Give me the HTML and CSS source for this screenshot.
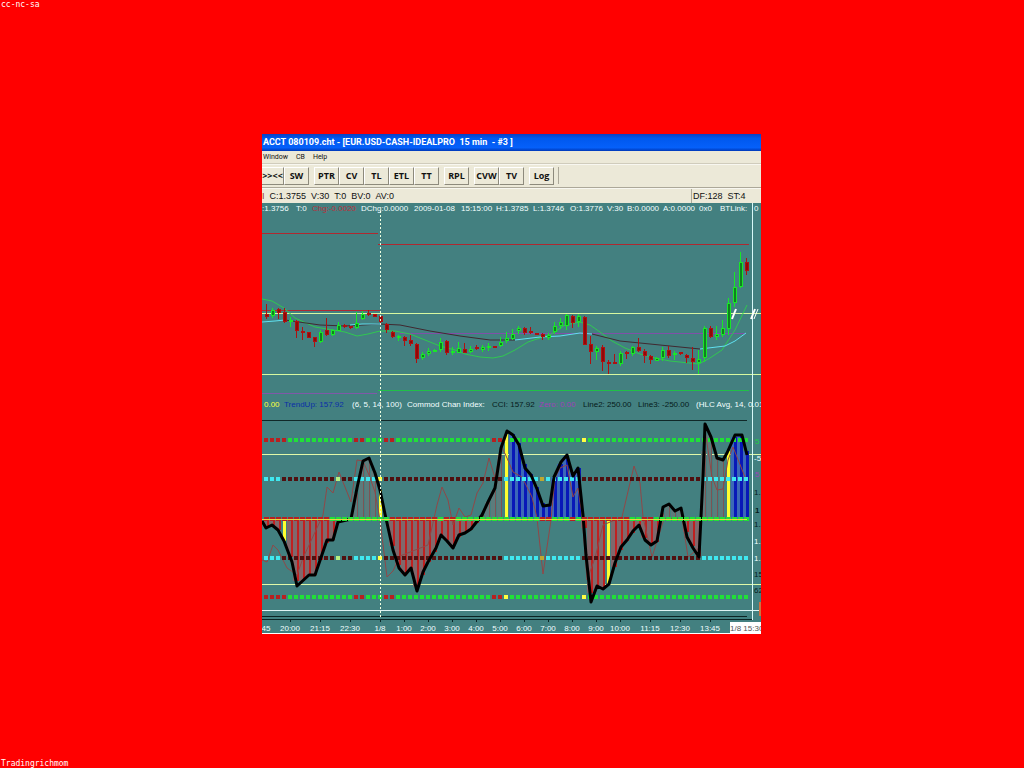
FILE: index.html
```
<!DOCTYPE html>
<html lang="en">
<head>
    <meta charset="UTF-8">
    <meta name="viewport" content="width=device-width, initial-scale=1.0">
    <title>EUR.USD 15 min chart</title>
    <link rel="stylesheet" href="styles.css">
</head>
<body>
    <header class="credit">cc-nc-sa</header>
    <main class="window">
        <h1 class="title-bar">ACCT 080109.cht - [EUR.USD-CASH-IDEALPRO&nbsp; 15 min&nbsp; - #3 ]</h1>
        <nav class="menu-bar">
            <button class="menu-item">Window</button>
            <button class="menu-item">CB</button>
            <button class="menu-item">Help</button>
        </nav>
        <div class="toolbar">
            <div class="group">
                <button class="tool tool-cut">&gt;&gt;&lt;&lt;</button>
                <button class="tool">SW</button>
            </div>
            <div class="group">
                <button class="tool">PTR</button>
                <button class="tool">CV</button>
                <button class="tool">TL</button>
                <button class="tool">ETL</button>
                <button class="tool">TT</button>
            </div>
            <div class="group">
                <button class="tool">RPL</button>
            </div>
            <div class="group">
                <button class="tool">CVW</button>
                <button class="tool">TV</button>
            </div>
            <div class="group">
                <button class="tool">Log</button>
            </div>
        </div>
        <div class="status-bar">
            <span class="edge">I</span>
            <span>C:1.3755</span>
            <span>V:30</span>
            <span>T:0</span>
            <span>BV:0</span>
            <span>AV:0</span>
            <div class="status-right">
                <span>DF:128</span>
                <span>ST:4</span>
            </div>
        </div>
        <svg class="chart" id="chart" viewBox="262 203 499 431" role="img" aria-label="EUR.USD candles with CCI panel">
            <g id="plot"></g>
            <g class="quote">
                <text x="262" y="211">:1.3756</text>
                <text x="296" y="211">T:0</text>
                <text x="312" y="211" class="loss">Chg:-0.0020</text>
                <text x="361" y="211">DChg:0.0000</text>
                <text x="414" y="211">2009-01-08</text>
                <text x="461" y="211">15:15:00</text>
                <text x="496" y="211">H:1.3785</text>
                <text x="533" y="211">L:1.3746</text>
                <text x="570" y="211">O:1.3776</text>
                <text x="607" y="211">V:30</text>
                <text x="627" y="211">B:0.0000</text>
                <text x="663" y="211">A:0.0000</text>
                <text x="699" y="211">0x0</text>
                <text x="720" y="211">BTLink:</text>
                <text x="754" y="211">0</text>
            </g>
            <g class="quote">
                <text x="264" y="407" class="yellow">0.00</text>
                <text x="284" y="407" class="trend">TrendUp: 157.92</text>
                <text x="352" y="407">(6, 5, 14, 100)</text>
                <text x="407" y="407">Commod Chan Index:</text>
                <text x="492" y="407" class="dark">CCI: 157.92</text>
                <text x="539" y="407" class="zero">Zero: 0.00</text>
                <text x="583" y="407" class="dark">Line2: 250.00</text>
                <text x="638" y="407" class="dark">Line3: -250.00</text>
                <text x="696" y="407">(HLC Avg, 14, 0.01</text>
            </g>
            <g class="scale">
                <text x="755" y="444" class="up">5</text>
                <text x="754" y="461">-5</text>
                <text x="755" y="477" class="zero">5</text>
                <text x="754" y="495" class="dark">1.</text>
                <text x="755" y="513" class="dark strong">1</text>
                <text x="754" y="527" class="dark">1.</text>
                <text x="754" y="544">1.</text>
                <text x="754" y="561">1.</text>
                <text x="754" y="577" class="dark">15</text>
                <text x="754" y="593" class="dark">62</text>
            </g>
            <g class="times" id="times"></g>
            <rect x="730" y="622" width="31" height="11" fill="#fff"/>
            <text x="730" y="631" class="now">1/8 15:30</text>
        </svg>
    </main>
    <footer class="credit credit-bottom">Tradingrichmom</footer>
    <script src="chart.js"></script>
</body>
</html>
```
FILE: styles.css
```
* {
    box-sizing: border-box;
}
body {
    margin: 0;
    padding-right: 1px;
    min-height: 100vh;
    display: grid;
    grid-template-rows: 1fr auto 1fr;
    background-color: #ff0000;
    font-family: "Liberation Sans", Arial, sans-serif;
}
.credit {
    padding: 0 1px;
    font-family: "DejaVu Sans Mono", monospace;
    font-size: 8px;
    line-height: 9px;
    color: #fff;
}
.credit-bottom {
    align-self: end;
}
.window {
    width: 100%;
    max-width: 499px;
    margin: 0 auto;
    overflow: hidden;
    background-color: #ece9d8;
    color: #111;
}
.title-bar {
    margin: 0;
    padding: 0 1px;
    background: linear-gradient(#0a3fc4, #0058ee 25%, #0560fa 80%, #0038b8);
    color: #fff;
    font-family: Roboto, sans-serif;
    font-size: 9px;
    font-weight: bold;
    line-height: 17px;
    white-space: nowrap;
}
.menu-bar {
    display: flex;
    gap: 8px;
    height: 13px;
    padding: 0 1px;
    border-bottom: 1px solid #d0ccbc;
}
.menu-item {
    padding: 0;
    border: none;
    background: none;
    color: #111;
    font-family: Roboto, sans-serif;
    font-size: 7px;
    line-height: 12px;
}
.toolbar {
    display: flex;
    gap: 5px;
    height: 24px;
    padding: 2px 0 3px;
    border-top: 1px solid #f8f7f0;
    border-bottom: 1px solid #aca899;
}
.group {
    display: flex;
}
.group:last-child {
    padding-right: 4px;
    border-right: 1px solid #aca899;
}
.tool {
    width: 25px;
    height: 18px;
    padding: 0;
    border: 1px solid;
    border-color: #fff #8d8a7c #8d8a7c #fff;
    background-color: #ece9d8;
    color: #111;
    font-family: "Open Sans", sans-serif;
    font-size: 9px;
    font-weight: bold;
    line-height: 16px;
}
.tool-cut {
    width: 22px;
    border-left: none;
}
.status-bar {
    display: flex;
    gap: 5px;
    height: 15px;
    border-top: 1px solid #f8f7f0;
    font-size: 9px;
    line-height: 14px;
    white-space: nowrap;
}
.edge {
    color: #a03020;
}
.status-right {
    display: flex;
    gap: 5px;
    width: 70px;
    margin-left: auto;
    padding-left: 1px;
    border-left: 1px solid #aca899;
}
.chart {
    display: block;
    width: 100%;
    height: auto;
    background-color: #438080;
}
.chart text {
    font-size: 8px;
    fill: #f2ffff;
    white-space: pre;
}
.chart .loss {
    fill: #b8323c;
}
.chart .yellow {
    fill: #ffff40;
}
.chart .trend {
    fill: #0a2fa8;
}
.chart .dark {
    fill: #061a1a;
}
.chart .zero {
    fill: #a040b8;
}
.chart .up {
    fill: #20d040;
}
.chart .strong {
    font-weight: bold;
}
.chart .now {
    fill: #555;
}
.times text {
    text-anchor: middle;
}
```
FILE: chart.js
```
const plot = document.getElementById("plot");
const times = document.getElementById("times");
const FIRST = 266;
const STEP = 6;
const ZERO = 519;

function add(parent, tag, attrs, text) {
    const el = document.createElementNS("http://www.w3.org/2000/svg", tag);
    for (const key in attrs) el.setAttribute(key, attrs[key]);
    if (text) el.textContent = text;
    parent.appendChild(el);
}

function rect(x, y, width, height, fill) {
    add(plot, "rect", {x, y, width, height, fill, "shape-rendering": "crispEdges"});
}

function line(points, stroke, width) {
    add(plot, "polyline", {points, fill: "none", stroke, "stroke-width": width, "stroke-linejoin": "round"});
}

// colour, wick top, wick bottom, body top, body bottom
const candles = `r 304 319 314 317,g 308 318 310 316,r 308 319 309 313,r 308 323 312 322,g 317 327 320 322,
r 320 338 321 331,r 327 340 331 333,r 332 338 332 338,r 337 347 337 342,g 330 343 332 342,r 318 336 330 335,
g 329 336 330 335,g 322 331 325 331,r 324 328 325 327,r 326 329 326 328,g 312 329 323 328,g 311 320 314 319,
r 310 316 313 315,r 314 317 314 317,r 315 323 316 322,r 323 333 324 330,r 331 338 332 337,g 335 341 336 338,
r 336 346 337 341,r 335 346 340 344,r 343 363 344 359,g 352 360 354 358,g 348 356 351 354,g 349 352 350 352,
g 338 352 342 350,r 340 355 341 353,g 347 355 351 352,g 342 353 348 353,r 343 353 349 353,g 346 353 349 352,
r 345 350 347 348,g 345 352 347 350,g 343 351 346 348,r 346 348 346 348,g 337 347 342 346,g 332 343 338 341,
g 329 340 334 339,g 326 334 328 331,r 327 335 328 333,r 327 334 331 332,r 333 335 333 335,r 333 340 334 337,
g 333 340 335 338,g 322 334 326 332,g 318 329 322 326,g 314 330 315 326,r 315 328 316 323,g 314 327 316 322,
r 316 345 317 345,r 336 364 344 352,g 346 360 348 352,r 345 371 347 362,r 360 374 362 364,r 354 364 362 363,
g 351 366 353 364,r 351 359 352 354,g 346 356 347 354,r 338 352 347 351,r 349 363 351 356,r 355 364 356 360,
g 357 361 358 361,g 347 361 350 358,r 346 358 350 356,g 351 360 353 355,r 352 355 352 354,r 354 363 355 358,
r 347 370 358 362,g 350 374 359 363,g 326 362 328 358,r 326 338 328 337,g 326 340 334 337,g 320 337 328 335,
g 298 335 303 329,g 272 307 287 303,g 252 288 262 287,r 258 275 262 271`.split(",").map(c => c.trim().split(" "));

const cci = [[262,521],[266,528],[272,525],[278,530],[284,541],[292,562],[297,586],[309,575],[315,575],[327,540],
    [333,540],[338,522],[351,519],[357,488],[363,461],[369,458],[375,473],[380,490],[385,514],[387,523],[393,550],
    [399,568],[405,575],[411,568],[417,591],[423,572],[428,562],[436,548],[441,535],[447,541],[453,548],[459,535],
    [465,533],[471,529],[482,515],[488,502],[495,488],[501,448],[507,431],[513,435],[519,445],[525,468],[531,475],
    [537,489],[543,506],[550,505],[554,477],[561,462],[567,455],[573,476],[578,468],[583,515],[586,555],[591,602],
    [597,586],[603,589],[609,584],[615,563],[621,547],[627,540],[633,531],[639,525],[645,540],[651,545],[657,541],
    [663,507],[669,504],[675,511],[681,508],[687,537],[693,548],[699,557],[703,477],[705,424],[711,437],[717,458],
    [723,460],[727,453],[735,435],[742,435],[747,455]];

const fastCci = "262,560 267,562 273,545 278,550 287,568 297,575 303,558 323,515 327,487 333,493 339,472 345,487 " +
    "351,502 357,460 363,461 369,475 375,492 380,520 387,577 393,571 400,556 428,545 437,505 442,487 448,500 453,525 " +
    "459,508 465,517 471,515 477,493 483,483 489,458 495,478 501,445 507,458 513,472 522,477 532,497 537,518 " +
    "543,574 551,520 555,478 560,468 567,465 573,497 578,488 582,515 587,580 595,558 603,525 622,517 634,466 640,483 " +
    "643,517 652,557 658,538 664,519 682,518 688,557 699,548 705,430 712,477 717,490 723,489 728,460 733,447 745,477";

// dot rows as colour key + run length
const outerRow = "r4 g11 r2 g3 r2 g16 r2 y1 g12 y1 g27";
const innerRow = "c3 m9 p1 m2 c4 y1 m20 c6 o1 c6 m20 c8";
const zeroRow = "r11 g10 r8 g1 r2 g14 r2 g3 r1 g1 r8 g2 r2 g16";
const dotColors = {r: "#b82020", g: "#20e038", y: "#ffff40", c: "#40e8f0", m: "#501010", p: "#b8f080", o: "#c0a830"};

function cciAt(x) {
    for (let i = 1; i < cci.length; i++) {
        if (x <= cci[i][0]) {
            const [x0, y0] = cci[i - 1];
            const [x1, y1] = cci[i];
            return Math.round(y0 + (y1 - y0) * (x - x0) / (x1 - x0));
        }
    }
    return ZERO;
}

function dots(row, y, width, height) {
    let i = 0;
    for (const run of row.split(" ")) {
        for (let n = 0; n < Number(run.slice(1)); n++, i++) {
            rect(FIRST + i * STEP - 2, y, width, height, dotColors[run[0]]);
        }
    }
}

// price panel levels
rect(262, 233, 116, 1, "#b02830");
rect(378, 244, 371, 1, "#b02830");
rect(262, 310, 118, 1, "#b02830");
rect(262, 313, 499, 1, "#d8f8a0");
rect(262, 374, 499, 1, "#d8f8a0");
rect(262, 393, 115, 1, "#8058a8");
rect(378, 390, 371, 1, "#20c048");
rect(400, 333, 345, 1, "#8050a8");

// moving averages
line("262,299 272,301 284,308 295,318 315,327 333,330 345,332 357,336 368,334 380,331 395,331 410,334 430,342 440,346 " +
    "455,350 465,354 480,357 493,358 503,356 515,350 528,342 540,338 550,335 565,325 580,322 590,325 600,332 612,341 " +
    "625,348 640,354 655,358 670,361 699,364 710,358 722,350 735,330 747,305", "#30c850", 1);
line("285,320 320,325 345,326 380,324 400,325 430,331 460,336 490,340 515,340", "#402830", 1);
line("592,334 620,341 660,345 700,349", "#402830", 1);
line("262,322 275,321 285,320", "#60e0f0", 1);
line("350,325 362,324 380,324", "#60e0f0", 1);
line("515,340 540,337 560,336 580,333 592,334", "#60e0f0", 1);
line("700,349 725,346 735,341 746,333", "#60e0f0", 1);

candles.forEach(([color, high, low, top, bottom], i) => {
    const x = FIRST + i * STEP;
    const edge = color === "g" ? "#18e828" : "#b01010";
    rect(x, high, 1, low - high, edge);
    rect(x - 1, top, 4, Math.max(bottom - top, 2), edge);
    rect(x, Number(top) + 1, 2, Math.max(bottom - top - 2, 0), color === "g" ? "#108020" : "#900808");
});

// CCI panel
rect(262, 420, 485, 1, "#102828");
rect(262, 454, 499, 1, "#e0f8a8");
rect(262, 584, 499, 1, "#e0f8a8");
rect(262, 610, 499, 1, "#e0f4f4");
rect(262, 616, 485, 1, "#0c2424");
rect(262, 619, 490, 1, "#0c2424");

const yellowBars = [3, 19, 40, 57, 77];
for (let i = 0; i <= 80; i++) {
    const x = FIRST + i * STEP;
    const y = cciAt(x);
    const top = Math.min(y, ZERO);
    const height = Math.abs(y - ZERO);
    const blue = (i > 40 && i < 53) || i > 77;
    if (yellowBars.includes(i)) {
        rect(x - 1, top, 3, height, "#ffff30");
    } else if (blue) {
        rect(x - 3, top, 3, height, "#3c68b8");
        rect(x, top, 3, height, "#0818b8");
    } else if (y > ZERO) {
        rect(x - 3, top, 4, height, "#80686c");
        rect(x + 1, top, 2, height, "#c02020");
    } else {
        rect(x - 3, top, 4, height, "#5c7c7c");
        rect(x + 1, top, 1, height, "#7c5454");
    }
}

line(fastCci, "#904848", 1);
dots(outerRow, 438, 4, 4);
dots(innerRow, 477, 4, 4);
dots(innerRow, 556, 4, 4);
dots(outerRow, 595, 4, 4);
line(cci.map(p => p.join(",")).join(" "), "#000", 3);
dots(zeroRow, 517, 5, 4);
rect(262, 519, 485, 1, "#e8d840");

// day break and cursor
add(plot, "line", {x1: 380.5, x2: 380.5, y1: 211, y2: 619, stroke: "#f0ffe0", "stroke-dasharray": "2 2"});
rect(752, 203, 1, 417, "#d8f8f8");
line("732,319 736,309", "#fff", 2);
line("751,319 755,309", "#fff", 2);
line("754,319 758,309", "#fff", 1);
rect(759, 602, 2, 14, "#d07040");
rect(262, 633, 499, 1, "#fff");

const labels = [[290, "20:00"], [320, "21:15"], [350, "22:30"], [380, "1/8"], [404, "1:00"], [428, "2:00"], [452, "3:00"],
    [476, "4:00"], [500, "5:00"], [524, "6:00"], [548, "7:00"], [572, "8:00"], [596, "9:00"], [620, "10:00"], [650, "11:15"],
    [680, "12:30"], [710, "13:45"]];
add(times, "text", {x: 266, y: 631}, "45");
for (const [x, label] of labels) {
    rect(x, 619, 1, 3, "#0c2424");
    add(times, "text", {x, y: 631}, label);
}
```
